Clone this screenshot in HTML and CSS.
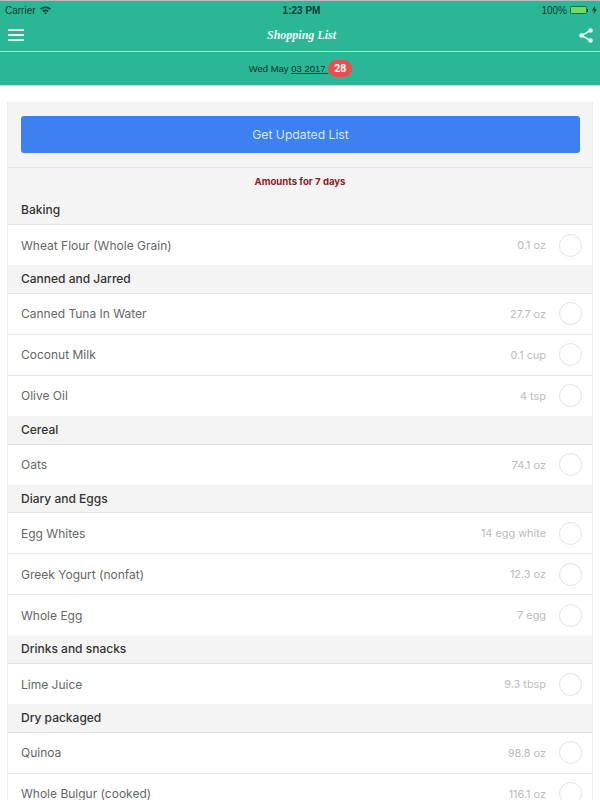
FILE: index.html
```html
<!DOCTYPE html>
<html lang="en">
<head>
<meta charset="utf-8">
<title>Shopping List</title>
<link rel="stylesheet" href="styles.css">
</head>
<body>
<header class="top">
  <div class="status">
    <div class="status-left">
      <span>Carrier</span>
      <svg class="wifi" width="11" height="9" viewBox="0 0 11 9"><path d="M0 2.6C3 -.2 8 -.2 11 2.6L9.9 3.8C7.4 1.6 3.6 1.6 1.1 3.8Z M2.2 4.8C4 3.2 7 3.2 8.8 4.8L7.7 6C6.5 5 4.5 5 3.3 6Z M4.2 6.9C5 6.3 6 6.3 6.8 6.9L5.5 8.4Z" fill="#0f3d33"/></svg>
    </div>
    <div class="status-time">1:23 PM</div>
    <div class="status-right">
      <span>100%</span>
      <span class="battery"><span class="battery-fill"></span></span>
      <span class="battery-tip"></span>
      <svg width="5" height="8" viewBox="0 0 5 8"><path d="M3 0L0 4.6H2L1.6 8L5 3.2H2.8Z" fill="#0f3d33"/></svg>
    </div>
  </div>
  <div class="nav">
    <div class="burger"><span></span><span></span><span></span></div>
    <div class="title">Shopping List</div>
    <svg class="share" width="14" height="15" viewBox="0 0 14 15"><path d="M11.5 2.5L2.5 7.5L11.5 12.5" fill="none" stroke="#e6f7f2" stroke-width="1.5"/><circle cx="11.5" cy="2.5" r="2.3" fill="#e6f7f2"/><circle cx="2.5" cy="7.5" r="2.3" fill="#e6f7f2"/><circle cx="11.5" cy="12.5" r="2.3" fill="#e6f7f2"/></svg>
  </div>
  <div class="dateline">
    <span class="date">Wed May <u>03 2017&nbsp;</u></span><span class="badge">28</span>
  </div>
</header>
<main class="card">
  <div class="action"><button class="update">Get Updated List</button></div>
  <div class="amounts">Amounts for 7 days</div>
  <section>
    <h2 class="group first">Baking</h2>
    <div class="row"><span class="name">Wheat Flour (Whole Grain)</span><span class="qty">0.1 oz</span><span class="check"></span></div>
  </section>
  <section>
    <h2 class="group">Canned and Jarred</h2>
    <div class="row"><span class="name">Canned Tuna In Water</span><span class="qty">27.7 oz</span><span class="check"></span></div>
    <div class="row"><span class="name">Coconut Milk</span><span class="qty">0.1 cup</span><span class="check"></span></div>
    <div class="row"><span class="name">Olive Oil</span><span class="qty">4 tsp</span><span class="check"></span></div>
  </section>
  <section>
    <h2 class="group">Cereal</h2>
    <div class="row"><span class="name">Oats</span><span class="qty">74.1 oz</span><span class="check"></span></div>
  </section>
  <section>
    <h2 class="group">Diary and Eggs</h2>
    <div class="row"><span class="name">Egg Whites</span><span class="qty">14 egg white</span><span class="check"></span></div>
    <div class="row"><span class="name">Greek Yogurt (nonfat)</span><span class="qty">12.3 oz</span><span class="check"></span></div>
    <div class="row"><span class="name">Whole Egg</span><span class="qty">7 egg</span><span class="check"></span></div>
  </section>
  <section>
    <h2 class="group">Drinks and snacks</h2>
    <div class="row"><span class="name">Lime Juice</span><span class="qty">9.3 tbsp</span><span class="check"></span></div>
  </section>
  <section>
    <h2 class="group">Dry packaged</h2>
    <div class="row"><span class="name">Quinoa</span><span class="qty">98.8 oz</span><span class="check"></span></div>
    <div class="row"><span class="name">Whole Bulgur (cooked)</span><span class="qty">116.1 oz</span><span class="check"></span></div>
  </section>
</main>
</body>
</html>
```
FILE: styles.css
```css
html, body {
  margin: 0;
  height: 800px;
  overflow: hidden;
  background: #ffffff;
  font-family: "Roboto", "Liberation Sans", sans-serif;
}
.top {
  background: #2bb796;
  border-top: 1px solid #b9bdbb;
  border-bottom: 1px solid #b5e5da;
  height: 84px;
  display: flex;
  flex-direction: column;
}
.status {
  height: 18px;
  display: grid;
  grid-template-columns: 1fr auto 1fr;
  align-items: center;
  padding: 0 3px 0 5px;
  font-family: "Liberation Sans", sans-serif;
  font-size: 10px;
  color: #0f3d33;
}
.status-left { display: flex; align-items: center; gap: 4px; }
.status-time { font-weight: bold; padding-left: 1px; }
.status-right { display: flex; align-items: center; justify-content: flex-end; }
.battery {
  display: block;
  width: 15px;
  height: 6px;
  padding: 0;
  margin-left: 3px;
  border: 1px solid #1c6a58;
  border-radius: 2px;
}
.battery-fill { display: block; height: 100%; background: #6fdc5e; }
.battery-tip { width: 1px; height: 3px; background: #0f3d33; margin-right: 4px; }
.nav {
  height: 32px;
  display: flex;
  align-items: center;
  justify-content: space-between;
  padding: 0 7px 0 8px;
  border-bottom: 1px solid #a6e0d2;
}
.burger { width: 16px; display: flex; flex-direction: column; gap: 3px; }
.burger span { display: block; height: 2px; background: #e6f7f2; }
.title {
  font-family: "Liberation Serif", serif;
  font-style: italic;
  font-weight: bold;
  font-size: 12px;
  color: #eefaf7;
}
.dateline {
  flex: 1;
  display: flex;
  align-items: center;
  justify-content: center;
  padding-left: 1px;
}
.date { font-size: 9.5px; color: #0f2f29; font-family: "Liberation Sans", sans-serif; }
.badge {
  background: #ec4e4b;
  color: #ffffff;
  font-size: 10.5px;
  font-weight: 700;
  line-height: 17px;
  padding: 0 6px;
  border-radius: 9px;
}
.card {
  margin: 16px 7px 0 7px;
  background: #f4f4f4;
  border-left: 1px solid #ececec;
  border-right: 1px solid #ececec;
}
.action {
  padding: 14px 12px 14px 13px;
  border-bottom: 1px solid #e4e4e4;
}
.update {
  display: block;
  width: 100%;
  height: 37px;
  border: 0;
  border-radius: 3px;
  background: #3c80f2;
  color: #dbe8fd;
  font-family: "Inter", "Liberation Sans", sans-serif;
  font-size: 12.2px;
  text-align: center;
}
.amounts {
  height: 27px;
  line-height: 28px;
  text-align: center;
  font-family: "Inter", "Liberation Sans", sans-serif;
  font-size: 9.6px;
  font-weight: 700;
  color: #8e1b24;
}
.group {
  margin: 0;
  padding: 0 13px;
  height: 27.75px;
  line-height: 28px;
  border-bottom: 1px solid #e2e2e2;
  font-family: "Inter", "Liberation Sans", sans-serif;
  font-size: 12px;
  font-weight: 500;
  color: #333333;
}
.group.first { height: 29px; line-height: 29px; }
.row {
  height: 40px;
  display: flex;
  align-items: center;
  padding: 0 10px 0 13px;
  background: #ffffff;
  border-bottom: 1.25px solid #e8e8e8;
  font-family: "Inter", "Liberation Sans", sans-serif;
  font-size: 12px;
}
.row:last-child { border-bottom: 0; }
.name { flex: 1; color: #666666; }
.qty { font-size: 10.9px; color: #bbbbbb; margin-right: 13px; }
.check {
  box-sizing: border-box;
  width: 23px;
  height: 23px;
  border: 1px solid #e2e2e2;
  border-radius: 50%;
}
```
